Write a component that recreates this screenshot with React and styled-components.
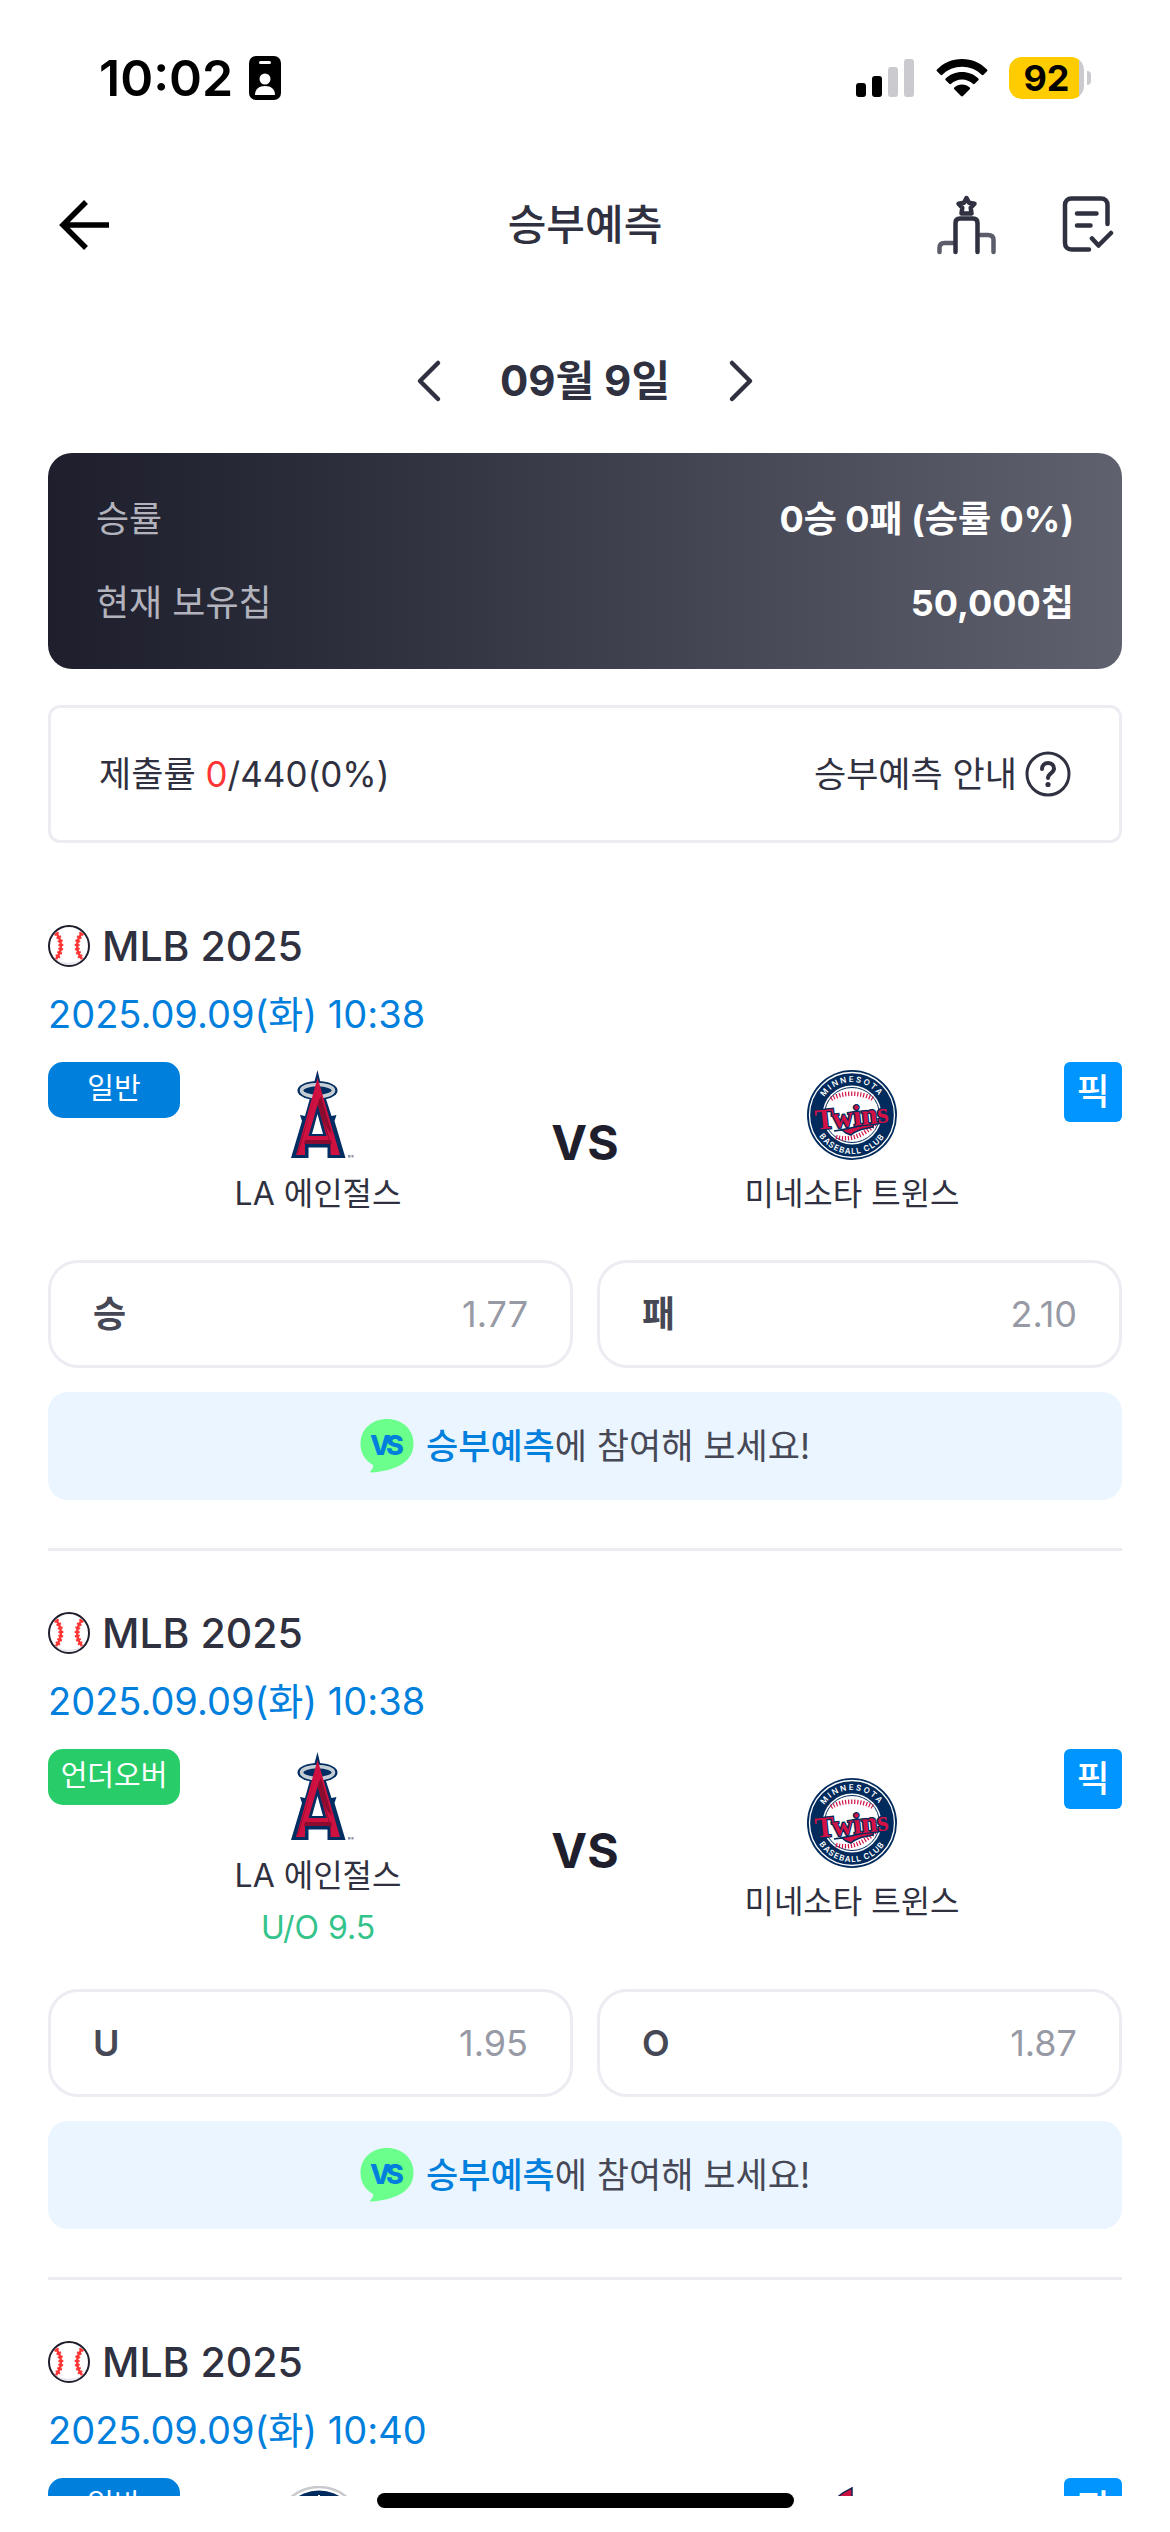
import React from 'react';
import styled, { createGlobalStyle } from 'styled-components';

const color = {
  ink: '#2f3140',
  night: '#1e1e2c',
  slate: '#464856',
  muted: '#979aa5',
  line: '#ecedf2',
  blue: '#0080dc',
  sky: '#0095ff',
  green: '#28cd69',
  teal: '#34c38a',
  red: '#ff3434',
};

const GlobalStyle = createGlobalStyle`
  *, *::before, *::after { box-sizing: border-box; }
  body {
    margin: 0;
    background: #fff;
    color: ${color.ink};
    font-family: Inter, "Noto Sans CJK KR", sans-serif;
  }
  h1, h2, p { margin: 0; font-weight: inherit; font-size: inherit; }
  button { margin: 0; padding: 0; border: 0; background: none; font: inherit; color: inherit; cursor: pointer; }
  svg { display: block; flex: none; }
`;

const Screen = styled.div`
  display: flex;
  flex-direction: column;
  height: 100vh;
  padding-bottom: 36px;
  overflow: hidden;
`;

const StatusBar = styled.div`
  display: flex;
  align-items: center;
  justify-content: space-between;
  flex: none;
  height: 156px;
  padding: 0 79px 0 99px;
  color: #000;
`;

const StatusGroup = styled.div`
  display: flex;
  align-items: center;
  gap: ${(p) => p.$gap}px;
`;

const Clock = styled.span`
  font-size: 50px;
  line-height: 60px;
  font-weight: 600;
`;

const Battery = styled.div`
  display: flex;
  align-items: center;
  gap: 3px;
`;

const BatteryBody = styled.span`
  width: 75px;
  height: 42px;
  border-radius: 13px;
  background: linear-gradient(90deg, #ffcc00 93%, #cbcbcf 93%);
  font-size: 36px;
  line-height: 42px;
  font-weight: 700;
  text-align: center;
`;

const BatteryTip = styled.span`
  width: 4px;
  height: 14px;
  border-radius: 0 4px 4px 0;
  background: #cbcbcf;
`;

const Header = styled.header`
  display: grid;
  grid-template-columns: 1fr auto 1fr;
  align-items: center;
  flex: none;
  height: 138px;
  padding: 0 56px;
`;

const Title = styled.h1`
  font-size: 42px;
  line-height: 60px;
  font-weight: 500;
`;

const HeaderActions = styled.div`
  display: flex;
  align-items: center;
  justify-content: flex-end;
  gap: 65px;
`;

const IconButton = styled.button`
  display: flex;
  justify-self: start;
`;

const DateNav = styled.nav`
  display: flex;
  align-items: center;
  justify-content: center;
  gap: 58px;
  flex: none;
  padding: 57px 0 42px;
`;

const CurrentDate = styled.span`
  font-size: 42px;
  line-height: 60px;
  font-weight: 700;
`;

const Content = styled.main`
  flex: 1;
  min-height: 0;
  overflow-y: auto;
  scrollbar-width: none;
  padding: 0 48px;
`;

const Summary = styled.dl`
  display: flex;
  flex-direction: column;
  gap: 36px;
  margin: 0 0 36px;
  padding: 42px 48px;
  border-radius: 24px;
  background: linear-gradient(90deg, #1e1e2c 0%, #2c2e3b 27%, #5f616e 100%);
`;

const SummaryRow = styled.div`
  display: flex;
  justify-content: space-between;
  font-size: 36px;
  line-height: 48px;
`;

const SummaryLabel = styled.dt`
  color: #b2b3bc;
`;

const SummaryValue = styled.dd`
  margin: 0;
  color: #fff;
  font-weight: 700;
`;

const SubmitBox = styled.section`
  display: flex;
  align-items: center;
  justify-content: space-between;
  padding: 42px 48px;
  border: 3px solid ${color.line};
  border-radius: 12px;
  font-size: 35px;
  line-height: 48px;
`;

const Submitted = styled.span`
  color: ${color.red};
`;

const GuideButton = styled.button`
  display: flex;
  align-items: center;
  gap: 8px;
`;

const Game = styled.article`
  padding: ${(p) => (p.$first ? 76 : 55)}px 0 48px;
  border-bottom: 3px solid ${color.line};
`;

const League = styled.h2`
  display: flex;
  align-items: center;
  gap: 12px;
  font-size: 41px;
  line-height: 54px;
  font-weight: 500;
`;

const StartTime = styled.p`
  padding: 11px 0 18px;
  color: ${color.blue};
  font-size: 38px;
  line-height: 60px;
`;

const Match = styled.div`
  display: grid;
  grid-template-columns: 132px 1fr 258px 1fr 132px;
  align-items: center;
  min-height: 162px;
`;

const KindBadge = styled.span`
  align-self: start;
  height: 56px;
  border-radius: 15px;
  background: ${(p) => (p.$kind === '일반' ? color.blue : color.green)};
  color: #fff;
  font-size: 29px;
  line-height: 54px;
  text-align: center;
`;

const PickButton = styled.button`
  && {
    align-self: start;
    justify-self: end;
    width: 58px;
    height: 60px;
    border-radius: 6px;
    background: ${color.sky};
    color: #fff;
    font-size: 36px;
    line-height: 58px;
    font-weight: 500;
  }
`;

const Team = styled.div`
  display: flex;
  flex-direction: column;
  align-items: center;
  padding: 3px 0;
  font-size: 32px;
  line-height: 44px;
  white-space: nowrap;
`;

const TeamName = styled.span`
  margin-top: 12px;
`;

const Handicap = styled.span`
  margin-top: 8px;
  color: ${color.teal};
`;

const Versus = styled.span`
  color: ${color.night};
  font-size: 48px;
  line-height: 60px;
  font-weight: 700;
  text-align: center;
`;

const Options = styled.div`
  display: grid;
  grid-template-columns: 1fr 1fr;
  gap: 24px;
  margin: 36px 0 24px;
`;

const Option = styled.button`
  && {
    display: flex;
    align-items: center;
    justify-content: space-between;
    height: 108px;
    padding: 0 42px;
    border: 3px solid ${color.line};
    border-radius: 30px;
    color: ${color.slate};
    font-size: 36px;
    line-height: 48px;
    font-weight: 600;
  }
`;

const Odds = styled.span`
  color: ${color.muted};
  font-weight: 400;
`;

const JoinButton = styled.button`
  && {
    display: flex;
    align-items: center;
    justify-content: center;
    gap: 12px;
    width: 100%;
    height: 108px;
    border-radius: 20px;
    background: #eaf5ff;
    color: ${color.slate};
    font-size: 35px;
    line-height: 48px;
  }
`;

const JoinAccent = styled.span`
  color: ${color.blue};
  font-weight: 500;
`;

const HomeIndicator = styled.div`
  position: fixed;
  bottom: 24px;
  left: 50%;
  width: 417px;
  height: 15px;
  margin-left: -208px;
  border-radius: 8px;
  background: #000;
`;

function IdCardIcon() {
  return (
    <svg width="32" height="44" viewBox="0 0 32 44">
      <rect width="32" height="44" rx="7" fill="#000" />
      <rect x="10" y="5" width="12" height="3" rx="1.5" fill="#fff" />
      <circle cx="16" cy="23" r="5.5" fill="#fff" />
      <path d="M6 39c0-6 4-9 10-9s10 3 10 9z" fill="#fff" />
    </svg>
  );
}

function SignalIcon() {
  return (
    <svg width="59" height="38" viewBox="0 0 59 38">
      <rect x="0" y="24" width="10" height="14" rx="3" fill="#000" />
      <rect x="16" y="17" width="10" height="21" rx="3" fill="#000" />
      <rect x="32" y="8" width="10" height="30" rx="3" fill="#cbcbcf" />
      <rect x="48" y="0" width="10" height="38" rx="3" fill="#cbcbcf" />
    </svg>
  );
}

function WifiIcon() {
  return (
    <svg width="52" height="38" viewBox="0 0 52 38">
      <path d="M26 0C16 0 7.500 4 1 10.500c-.6.600-.6 1.200 0 1.800l3.500 3.500c.6.600 1.200.6 1.800 0C11.500 10.700 18.500 7.800 26 7.800s14.500 2.900 19.700 8c.6.600 1.200.6 1.800 0l3.500-3.500c.6-.6.600-1.200 0-1.800C44.500 4 36 0 26 0z" />
      <path d="M26 13c-6.300 0-12 2.400-16.300 6.400-.6.600-.6 1.200 0 1.800l3.600 3.600c.6.600 1.200.6 1.800 0C18 22.200 21.800 20.600 26 20.600s8 1.600 10.900 4.200c.6.600 1.200.6 1.800 0l3.600-3.600c.6-.6.600-1.200 0-1.800C38 15.400 32.300 13 26 13z" />
      <path d="M26 25.500c-3 0-5.600 1.100-7.700 2.900-.6.600-.6 1.200 0 1.800l6.700 6.900c.6.600 1.400.6 2 0l6.700-6.900c.6-.6.600-1.200 0-1.800-2.100-1.800-4.700-2.900-7.700-2.900z" />
    </svg>
  );
}

function BackIcon() {
  return (
    <svg width="56" height="56" viewBox="0 0 56 56" fill="none" stroke="#000" strokeWidth="5.500">
      <path d="M30 5L7 28l23 23M7 28h46" />
    </svg>
  );
}

function PodiumIcon() {
  return (
    <svg width="60" height="62" viewBox="0 0 60 62" fill="none" strokeWidth="4.500" strokeLinecap="round" strokeLinejoin="round">
      <g stroke="#5b5d6a">
        <path d="M2.500 58v-4c0-3.500 1.500-5 5-5H17" />
        <path d="M43 41h8c3.500 0 5.500 1.500 5.500 5v12" />
      </g>
      <path stroke={color.ink} d="M18.500 58V29c0-3 1.500-4.500 4.500-4.500h13c3 0 4.500 1.500 4.500 4.500v29" />
      <path stroke={color.ink} d="M29.500 4l2.500 4.800 5.500 1-3.800 4 .8 5.700h-10l.8-5.700-3.800-4 5.500-1z" />
    </svg>
  );
}

function SlipIcon() {
  return (
    <svg width="52" height="58" viewBox="0 0 52 58" fill="none" stroke={color.ink} strokeWidth="4.500" strokeLinecap="round" strokeLinejoin="round">
      <path d="M45.500 28V9c0-4-2.500-6.500-6.500-6.500H9.500C5.500 2.500 3 5 3 9v38c0 4 2.500 6.500 6.500 6.500H27" />
      <path d="M15 17.500h19.500M15 29.500h13.500" />
      <path d="M30 42.500l6.500 7L49 37" />
    </svg>
  );
}

function Chevron({ flip }) {
  return (
    <svg width="26" height="44" viewBox="0 0 26 44" fill="none" stroke={color.ink} strokeWidth="4.500" strokeLinecap="round" strokeLinejoin="round">
      <path d={flip ? 'M4 4l18 18L4 40' : 'M22 4L4 22l18 18'} />
    </svg>
  );
}

function HelpIcon() {
  return (
    <svg width="46" height="46" viewBox="0 0 46 46" fill="none" stroke={color.ink} strokeWidth="3" strokeLinecap="round">
      <circle cx="23" cy="23" r="21" />
      <path strokeWidth="4" d="M17 18c0-3.700 2.500-6 6-6s6 2.300 6 5.500c0 4.500-6 5-6 9.500" />
      <circle cx="23" cy="33.500" r="2.600" fill={color.ink} stroke="none" />
    </svg>
  );
}

function BaseballIcon() {
  return (
    <svg width="42" height="42" viewBox="0 0 42 42" fill="none">
      <circle cx="21" cy="21" r="20" fill="#fff" />
      <path d="M7 34c8 5 20 5 28 0-6 7-22 7-28 0z" fill="#e4e5ea" />
      <circle cx="21" cy="21" r="20" stroke={color.night} strokeWidth="2" />
      <g stroke={color.red}>
        <path strokeWidth="2.500" d="M8 8c6.500 8 6.500 18 0 26M34 8c-6.500 8-6.500 18 0 26" />
        <path strokeWidth="5" strokeDasharray="2 2" d="M8 8c6.500 8 6.500 18 0 26M34 8c-6.500 8-6.500 18 0 26" />
      </g>
    </svg>
  );
}

function VsBubble() {
  return (
    <svg width="54" height="54" viewBox="0 0 54 54">
      <path d="M27 0c15 0 26.500 10 26.500 24.500C53.500 43 36 52 11 53.500c-1 0-1.200-.8-.5-1.500 2-2 3-4 2.500-6C5 41.500.5 34 .5 25 .5 10 12 0 27 0z" fill="#6bff8c" />
      <g fontFamily="Inter, sans-serif" fontWeight="800" fontSize="27" fill={color.blue}>
        <text x="10" y="36">
          V<tspan x="26">S</tspan>
        </text>
      </g>
    </svg>
  );
}

function AngelsLogo() {
  return (
    <svg width="90" height="90" viewBox="0 0 90 90">
      <path d="M44.500 0l2.800 12h-6z" fill="#002d62" />
      <ellipse cx="44.500" cy="20.500" rx="20" ry="9.500" fill="#002d62" />
      <path
        d="M41.500 12h6l11 34 5-1-2 6 11 37H54.500V77.500h-19V88H18l11-37-2-6 5 1z"
        fill="#002d62"
      />
      <ellipse cx="44.500" cy="20.500" rx="16" ry="6" fill="none" stroke="#c4ced4" strokeWidth="3.600" />
      <path d="M44.500 8l2.500 8 20 69h-9.500V74H32v11h-9z" fill="#ce1141" />
      <path d="M43.500 20L29 70l-4 13h-1L35 48zM45.500 30l12 43v10l-1-10H57L44.500 36zM32 70h26l1 4H31zM48 26l11 38-5-6-9-26z" fill="#8c0c2f" />
      <path d="M44.500 35l9 31H35.500z" fill="#002d62" />
      <path d="M44.500 44l5.500 20H39z" fill="#fff" />
      <path d="M75 85h2.500v2.500H75zM78.500 85h2v2.500h-2z" fill="#8e95a8" />
    </svg>
  );
}

function TwinsLogo({ id }) {
  return (
    <svg width="90" height="90" viewBox="0 0 90 90">
      <defs>
        <path id={`${id}-top`} d="M12 45a33 33 0 0 1 66 0" />
        <path id={`${id}-bottom`} d="M6 45a39 39 0 0 0 78 0" />
      </defs>
      <circle cx="45" cy="45" r="45" fill="#002b5c" />
      <circle cx="45" cy="45" r="42.500" fill="none" stroke="#fff" strokeWidth="1.300" />
      <circle cx="45" cy="45" r="29.500" fill="#fff" />
      <circle cx="45" cy="45" r="27.500" fill="#fff" stroke="#002b5c" />
      <g fill="none" stroke="#d31145" strokeWidth="4.500" strokeDasharray="1.200 1.800">
        <path d="M24 29c11-7 31-7 42 0" />
        <path d="M29 67c13 4 27-1 39-13" />
      </g>
      <g fontFamily="Inter, sans-serif" fontWeight="600" fontSize="8" fill="#fff">
        <text textAnchor="middle" letterSpacing="2">
          <textPath href={`#${id}-top`} startOffset="50%">MINNESOTA</textPath>
        </text>
        <text textAnchor="middle" letterSpacing="1">
          <textPath href={`#${id}-bottom`} startOffset="50%">BASEBALL CLUB</textPath>
        </text>
      </g>
      <path d="M27 61c14-2 26-5 40-8l-1 4c-10 2-17 3-22 8l-5-2-4-3z" fill="#d31145" stroke="#002b5c" strokeWidth="1.500" />
      <text
        x="45"
        y="56"
        textAnchor="middle"
        transform="rotate(-6 45 50)"
        fontFamily="Liberation Serif, serif"
        fontWeight="700"
        fontSize="29"
        fill="#d31145"
        stroke="#002b5c"
        strokeWidth="2.500"
        paintOrder="stroke"
      >
        Twins
      </text>
    </svg>
  );
}

function RoundelLogo() {
  return (
    <svg width="90" height="90" viewBox="0 0 90 90">
      <circle cx="46" cy="44" r="43" fill="#fff" stroke="#c8c9cd" strokeWidth="2.500" />
      <circle cx="46" cy="44" r="39.500" fill="#002b5c" />
      <path d="M45 9h2v8h-2zM34 11l2-1 2 7-2 1zM57 10l2 1-2 7-2-1z" fill="#fff" />
      <circle cx="46" cy="45" r="25" fill="#fff" />
    </svg>
  );
}

function FeatherLogo() {
  return (
    <svg width="90" height="90" viewBox="0 0 90 90">
      <path d="M45 2c-6 3-11 5-15 10-8 12-12 34-8 72h23z" fill="#ce1141" stroke="#13274f" strokeWidth="1.500" />
    </svg>
  );
}

const teams = {
  angels: { name: 'LA 에인절스', Logo: AngelsLogo },
  twins: { name: '미네소타 트윈스', Logo: TwinsLogo },
  mariners: { name: '시애틀 매리너스', Logo: RoundelLogo },
  cardinals: { name: '세인트루이스', Logo: FeatherLogo },
};

const games = [
  { id: 'g1', time: '2025.09.09(화) 10:38', kind: '일반', home: 'angels', away: 'twins', options: [['승', '1.77'], ['패', '2.10']] },
  { id: 'g2', time: '2025.09.09(화) 10:38', kind: '언더오버', home: 'angels', away: 'twins', handicap: 'U/O 9.5', options: [['U', '1.95'], ['O', '1.87']] },
  { id: 'g3', time: '2025.09.09(화) 10:40', kind: '일반', home: 'mariners', away: 'cardinals', options: [] },
];

function TeamCell({ team, id, handicap }) {
  const { name, Logo } = teams[team];
  return (
    <Team>
      <Logo id={id} />
      <TeamName>{name}</TeamName>
      {handicap && <Handicap>{handicap}</Handicap>}
    </Team>
  );
}

function GameCard({ game, first }) {
  return (
    <Game $first={first}>
      <League>
        <BaseballIcon />
        MLB 2025
      </League>
      <StartTime>{game.time}</StartTime>
      <Match>
        <KindBadge $kind={game.kind}>{game.kind}</KindBadge>
        <TeamCell team={game.home} id={`${game.id}-home`} handicap={game.handicap} />
        <Versus>VS</Versus>
        <TeamCell team={game.away} id={`${game.id}-away`} />
        <PickButton type="button">픽</PickButton>
      </Match>
      {game.options.length > 0 && (
        <>
          <Options>
            {game.options.map(([label, odds]) => (
              <Option type="button" key={label}>
                {label}
                <Odds>{odds}</Odds>
              </Option>
            ))}
          </Options>
          <JoinButton type="button">
            <VsBubble />
            <span>
              <JoinAccent>승부예측</JoinAccent>에 참여해 보세요!
            </span>
          </JoinButton>
        </>
      )}
    </Game>
  );
}

export default function App() {
  return (
    <Screen>
      <GlobalStyle />
      <StatusBar>
        <StatusGroup $gap={16}>
          <Clock>10:02</Clock>
          <IdCardIcon />
        </StatusGroup>
        <StatusGroup $gap={21}>
          <SignalIcon />
          <WifiIcon />
          <Battery>
            <BatteryBody>92</BatteryBody>
            <BatteryTip />
          </Battery>
        </StatusGroup>
      </StatusBar>
      <Header>
        <IconButton type="button" aria-label="뒤로">
          <BackIcon />
        </IconButton>
        <Title>승부예측</Title>
        <HeaderActions>
          <IconButton type="button" aria-label="랭킹">
            <PodiumIcon />
          </IconButton>
          <IconButton type="button" aria-label="내 예측">
            <SlipIcon />
          </IconButton>
        </HeaderActions>
      </Header>
      <DateNav>
        <IconButton type="button" aria-label="이전 날짜">
          <Chevron />
        </IconButton>
        <CurrentDate>09월 9일</CurrentDate>
        <IconButton type="button" aria-label="다음 날짜">
          <Chevron flip />
        </IconButton>
      </DateNav>
      <Content>
        <Summary>
          <SummaryRow>
            <SummaryLabel>승률</SummaryLabel>
            <SummaryValue>0승 0패 (승률 0%)</SummaryValue>
          </SummaryRow>
          <SummaryRow>
            <SummaryLabel>현재 보유칩</SummaryLabel>
            <SummaryValue>50,000칩</SummaryValue>
          </SummaryRow>
        </Summary>
        <SubmitBox>
          <span>
            제출률 <Submitted>0</Submitted>/440(0%)
          </span>
          <GuideButton type="button">
            승부예측 안내
            <HelpIcon />
          </GuideButton>
        </SubmitBox>
        {games.map((game, i) => (
          <GameCard key={game.id} game={game} first={i === 0} />
        ))}
      </Content>
      <HomeIndicator />
    </Screen>
  );
}
